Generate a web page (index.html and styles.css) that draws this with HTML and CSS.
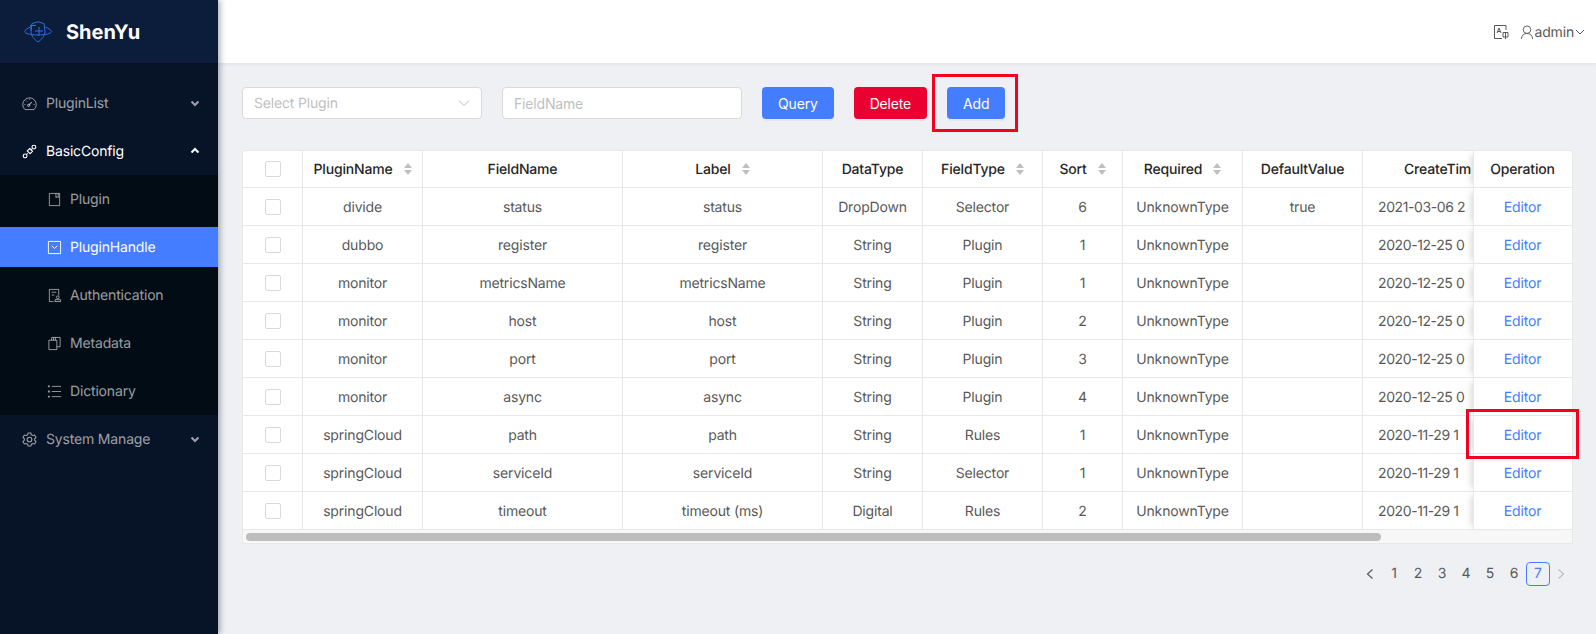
FILE: index.html
```html
<!DOCTYPE html>
<html lang="en">
  <head>
    <meta charset="UTF-8" />
    <title>ShenYu Gateway</title>
    <link rel="stylesheet" href="styles.css">
  </head>
  <body>
    <aside class="sidebar">
      <div class="logo">
        <svg class="logo-icon" viewBox="0 0 28 22" fill="none" stroke="#2f6fe0" stroke-width="1">
          <path d="M8 2.500L14 .8l6 1.700 1 8c0 4.500-3.500 8-7 10.500-3.500-2.500-7-6-7-10.500z"/>
          <path d="M6.500 6C3 7.500 .6 9.500 .6 10.500c0 2 6 3.500 13.400 3.500s13.400-1.500 13.400-3.500c0-1-2.400-3-5.900-4.500"/>
          <path d="M6 4.500h6M7 4.500v5M15 6v9M11 10h8"/>
        </svg>
        <span class="logo-text">ShenYu</span>
      </div>
      <nav class="menu">
        <div class="menu-item">
          <svg class="menu-icon" viewBox="0 0 16 16" fill="none" stroke="currentColor"><path d="M3.200 14.500A7.200 7.200 0 1 1 12.800 14.500z"/><path d="M7 10l3.500-3.500" stroke-width="1.300"/><circle cx="7" cy="10" r="1.200"/><path d="M2.500 9h1.200M4.500 4.800l.9.9M8 2.800V4M12.300 9h1.200"/></svg>
          <span>PluginList</span>
          <svg class="menu-arrow" viewBox="0 0 10 10" fill="none" stroke="currentColor" stroke-width="2"><path d="M1.500 3.500L5 7l3.500-3.500"/></svg>
        </div>
        <div class="menu-item open">
          <svg class="menu-icon" viewBox="0 0 16 16" fill="none" stroke="currentColor" stroke-width="1.200"><circle cx="3.300" cy="12.700" r="2"/><circle cx="12.700" cy="3.300" r="2"/><path d="M8.200 4.800l3 3-2.600 2.600-3-3zM5 11l1-1M11 5l-.8.800"/></svg>
          <span>BasicConfig</span>
          <svg class="menu-arrow" viewBox="0 0 10 10" fill="none" stroke="currentColor" stroke-width="2"><path d="M1.500 6.500L5 3l3.500 3.500"/></svg>
        </div>
        <div class="submenu">
          <div class="submenu-item">
            <svg class="menu-icon" viewBox="0 0 16 16" fill="none" stroke="currentColor"><path d="M2.500 1.500h11v13h-11zM9.500 1.500v4.500l1.500-1 1 1V1.500"/></svg>
            <span>Plugin</span>
          </div>
          <div class="submenu-item active">
            <svg class="menu-icon" viewBox="0 0 16 16" fill="none" stroke="currentColor"><path d="M1.500 1.500h13v13h-13z"/><path d="M5 6l3 3 3-3"/></svg>
            <span>PluginHandle</span>
          </div>
          <div class="submenu-item">
            <svg class="menu-icon" viewBox="0 0 16 16" fill="none" stroke="currentColor"><path d="M7 14.500H2.500v-13h10V8M5 4.500h5M5 7.500h3"/><circle cx="11.500" cy="10" r="1.500"/><path d="M8.500 14.500v-2h6v2z"/></svg>
            <span>Authentication</span>
          </div>
          <div class="submenu-item">
            <svg class="menu-icon" viewBox="0 0 16 16" fill="none" stroke="currentColor"><path d="M2 4.500h8.500v10H2zM5 4.500v-3h9v10h-3.500M7 1.500v3M9 1.500v3"/></svg>
            <span>Metadata</span>
          </div>
          <div class="submenu-item">
            <svg class="menu-icon" viewBox="0 0 16 16" fill="none" stroke="currentColor"><path d="M5 2.500h10M5 8h10M5 13.500h10"/><path d="M1 2.500h2M1 8h2M1 13.500h2" stroke-width="2"/></svg>
            <span>Dictionary</span>
          </div>
        </div>
        <div class="menu-item">
          <svg class="menu-icon" viewBox="0 0 16 16" fill="none" stroke="currentColor" stroke-width="1.100"><path d="M6.500 1l3 0 .5 2 1.500.8 2-.6 1.500 2.600-1.500 1.400v1.600l1.500 1.400-1.500 2.600-2-.6-1.500.8-.5 2h-3l-.5-2-1.500-.8-2 .6L1 10.200l1.500-1.400V7.200L1 5.800l1.500-2.600 2 .6L6 3z"/><circle cx="8" cy="8" r="2.500"/></svg>
          <span>System Manage</span>
          <svg class="menu-arrow" viewBox="0 0 10 10" fill="none" stroke="currentColor" stroke-width="2"><path d="M1.500 3.500L5 7l3.500-3.500"/></svg>
        </div>
      </nav>
    </aside>

    <div class="main">
      <header class="topbar">
        <svg class="lang-icon" viewBox="0 0 16 16" fill="none" stroke="#595959"><path d="M13 6V1.500H1.500v13H9"/><path d="M4 9l2-5 2 5M4.800 7.500h2.400"/><path d="M10 8.500h5v4.500h-5zM12.500 8.500V15"/></svg>
        <svg class="user-icon" viewBox="0 0 14 16" fill="none" stroke="#595959"><circle cx="7" cy="5" r="4"/><path d="M1 15c0-3.500 2.500-6 6-6s6 2.500 6 6"/></svg>
        <span class="user-name">admin</span>
        <svg class="user-arrow" viewBox="0 0 10 10" fill="none" stroke="#595959"><path d="M1 3l4 4 4-4"/></svg>
      </header>

      <section class="content">
        <div class="toolbar">
          <div class="select">
            <span>Select Plugin</span>
            <svg class="select-arrow" viewBox="0 0 12 12" fill="none" stroke="#bfbfbf"><path d="M1 3.500l5 5 5-5"/></svg>
          </div>
          <input class="input" placeholder="FieldName">
          <button class="btn primary">Query</button>
          <button class="btn danger">Delete</button>
          <button class="btn primary">Add</button>
        </div>

        <div class="card">
          <table class="table">
            <colgroup>
              <col class="w60"><col class="w120"><col class="w200"><col class="w200"><col class="w100"><col class="w120"><col class="w80"><col class="w120"><col class="w120"><col class="w110"><col class="w99">
            </colgroup>
            <thead>
              <tr>
                <th><span class="check"></span></th>
                <th><span class="th-sort">PluginName<i class="sorter"></i></span></th>
                <th>FieldName</th>
                <th><span class="th-sort">Label<i class="sorter"></i></span></th>
                <th>DataType</th>
                <th><span class="th-sort">FieldType<i class="sorter"></i></span></th>
                <th><span class="th-sort">Sort<i class="sorter"></i></span></th>
                <th><span class="th-sort">Required<i class="sorter"></i></span></th>
                <th>DefaultValue</th>
                <th class="cut-head">CreateTim</th>
                <th class="fixed">Operation</th>
              </tr>
            </thead>
            <tbody>
              <tr><td><span class="check"></span></td><td>divide</td><td>status</td><td>status</td><td>DropDown</td><td>Selector</td><td>6</td><td>UnknownType</td><td>true</td><td class="cut">2021-03-06 2</td><td class="fixed"><a>Editor</a></td></tr>
              <tr><td><span class="check"></span></td><td>dubbo</td><td>register</td><td>register</td><td>String</td><td>Plugin</td><td>1</td><td>UnknownType</td><td></td><td class="cut">2020-12-25 0</td><td class="fixed"><a>Editor</a></td></tr>
              <tr><td><span class="check"></span></td><td>monitor</td><td>metricsName</td><td>metricsName</td><td>String</td><td>Plugin</td><td>1</td><td>UnknownType</td><td></td><td class="cut">2020-12-25 0</td><td class="fixed"><a>Editor</a></td></tr>
              <tr><td><span class="check"></span></td><td>monitor</td><td>host</td><td>host</td><td>String</td><td>Plugin</td><td>2</td><td>UnknownType</td><td></td><td class="cut">2020-12-25 0</td><td class="fixed"><a>Editor</a></td></tr>
              <tr><td><span class="check"></span></td><td>monitor</td><td>port</td><td>port</td><td>String</td><td>Plugin</td><td>3</td><td>UnknownType</td><td></td><td class="cut">2020-12-25 0</td><td class="fixed"><a>Editor</a></td></tr>
              <tr><td><span class="check"></span></td><td>monitor</td><td>async</td><td>async</td><td>String</td><td>Plugin</td><td>4</td><td>UnknownType</td><td></td><td class="cut">2020-12-25 0</td><td class="fixed"><a>Editor</a></td></tr>
              <tr><td><span class="check"></span></td><td>springCloud</td><td>path</td><td>path</td><td>String</td><td>Rules</td><td>1</td><td>UnknownType</td><td></td><td class="cut">2020-11-29 1</td><td class="fixed"><a>Editor</a></td></tr>
              <tr><td><span class="check"></span></td><td>springCloud</td><td>serviceId</td><td>serviceId</td><td>String</td><td>Selector</td><td>1</td><td>UnknownType</td><td></td><td class="cut">2020-11-29 1</td><td class="fixed"><a>Editor</a></td></tr>
              <tr><td><span class="check"></span></td><td>springCloud</td><td>timeout</td><td>timeout (ms)</td><td>Digital</td><td>Rules</td><td>2</td><td>UnknownType</td><td></td><td class="cut">2020-11-29 1</td><td class="fixed"><a>Editor</a></td></tr>
            </tbody>
          </table>
          <div class="scroll-track"><div class="scroll-thumb"></div></div>
        </div>

        <div class="pagination">
          <svg class="page-arrow" viewBox="0 0 10 12" fill="none" stroke="#595959" stroke-width="1.200"><path d="M7.500 1.500L2.500 6l5 4.500"/></svg>
          <span class="page">1</span>
          <span class="page">2</span>
          <span class="page">3</span>
          <span class="page">4</span>
          <span class="page">5</span>
          <span class="page">6</span>
          <span class="page current">7</span>
          <svg class="page-arrow next" viewBox="0 0 10 12" fill="none" stroke="#bfbfbf" stroke-width="1.200"><path d="M2.500 1.500L7.500 6l-5 4.500"/></svg>
        </div>

        <div class="mark mark-add"></div>
        <div class="mark mark-editor"></div>
      </section>
    </div>
  </body>
</html>
```

FILE: styles.css
```css
* {
  box-sizing: border-box;
}
body {
  margin: 0;
  height: 634px;
  display: flex;
  overflow: hidden;
  background-color: #eef0f4;
  font-family: Inter, "Liberation Sans", sans-serif;
  font-size: 14px;
  letter-spacing: -.17px;
  text-rendering: geometricPrecision;
  color: #595959;
}

/* sidebar */
.sidebar {
  width: 218px;
  flex: none;
  background-color: #071326;
  box-shadow: 2px 0 6px rgba(0, 21, 41, .35);
  position: relative;
  z-index: 2;
}
.logo {
  height: 63px;
  display: flex;
  align-items: center;
  padding-left: 24px;
  background-color: #0c1c3b;
}
.logo-icon {
  width: 28px;
  height: 22px;
  margin-right: 14px;
}
.logo-text {
  font-size: 20px;
  font-weight: 700;
  letter-spacing: 0;
  color: #fff;
}
.menu {
  padding-top: 20px;
  color: rgba(255, 255, 255, .6);
}
.menu-item {
  height: 40px;
  margin-bottom: 8px;
  display: flex;
  align-items: center;
  padding-left: 22px;
  padding-right: 18px;
}
.menu-item span {
  flex: 1;
}
.menu-item.open {
  margin-bottom: 4px;
  color: #fff;
}
.menu-icon {
  width: 15px;
  height: 15px;
  margin-right: 9px;
  flex: none;
}
.menu-arrow {
  width: 10px;
  height: 10px;
}
.submenu {
  background-color: #020c14;
  padding: 4px 0;
  margin-bottom: 4px;
}
.submenu-item {
  height: 40px;
  margin-bottom: 8px;
  display: flex;
  align-items: center;
  padding-left: 47px;
}
.submenu-item .menu-icon {
  margin-right: 8px;
}
.submenu-item:last-child {
  margin-bottom: 0;
}
.submenu-item.active {
  background-color: #447dff;
  color: #fff;
}

/* top bar */
.main {
  flex: 1;
  min-width: 0;
}
.topbar {
  height: 63px;
  background-color: #fff;
  box-shadow: 0 1px 4px rgba(0, 21, 41, .08);
  display: flex;
  align-items: center;
  justify-content: flex-end;
  padding-right: 11px;
  padding-top: 1px;
}
.lang-icon {
  width: 16px;
  height: 16px;
  margin-right: 11px;
}
.user-icon {
  width: 14px;
  height: 15px;
}
.user-arrow {
  width: 10px;
  height: 10px;
  margin-left: 1px;
}

/* content */
.content {
  padding: 24px 23px 0 24px;
  position: relative;
}
.toolbar {
  display: flex;
  gap: 20px;
  margin-bottom: 31px;
}
.select,
.input {
  height: 32px;
  background-color: #fff;
  border: 1px solid #d9d9d9;
  border-radius: 4px;
  font-family: inherit;
  font-size: 14px;
  letter-spacing: inherit;
}
.select {
  width: 240px;
  display: flex;
  align-items: center;
  justify-content: space-between;
  padding: 0 11px;
  color: #bfbfbf;
}
.select-arrow {
  width: 12px;
  height: 12px;
}
.input {
  width: 240px;
  padding: 0 11px;
  outline: none;
}
.input::placeholder {
  color: #bfbfbf;
}
.btn {
  height: 32px;
  padding: 0 16px;
  border: 0;
  border-radius: 4px;
  color: #fff;
  font-family: inherit;
  font-size: 14px;
  letter-spacing: inherit;
  box-shadow: 0 2px 0 rgba(0, 0, 0, .03);
}
.primary {
  background-color: #447dff;
}
.danger {
  background-color: #eb0032;
}

/* table */
.card {
  height: 394px;
  background-color: #fff;
  border: 1px solid #e8e8e8;
  border-radius: 4px 4px 0 0;
  overflow: hidden;
}
.table {
  table-layout: fixed;
  width: 1329px;
  border-collapse: separate;
  border-spacing: 0;
}
.w60 { width: 60px; }
.w80 { width: 80px; }
.w99 { width: 99px; }
.w100 { width: 100px; }
.w110 { width: 110px; }
.w120 { width: 120px; }
.w200 { width: 200px; }
.table th,
.table td {
  padding: 0;
  text-align: center;
  white-space: nowrap;
  overflow: hidden;
  border-right: 1px solid #e8e8e8;
  border-bottom: 1px solid #e8e8e8;
  background-color: #fff;
}
.table th {
  height: 37px;
  font-weight: 500;
  color: #262626;
}
.table td {
  height: 38px;
  padding-top: 1px;
}
.table td a {
  color: #447dff;
}
.table .cut-head {
  text-align: left;
  padding-left: 41px;
  border-right: 0;
}
.table .cut {
  text-align: left;
  padding-left: 15px;
  letter-spacing: -.4px;
  border-right: 0;
}
.table .fixed {
  overflow: visible;
  position: relative;
  padding-right: 1px;
  border-right: 0;
  border-left: 1px solid #e8e8e8;
  box-shadow: -6px 0 6px -4px rgba(0, 0, 0, .15);
}
.check {
  display: block;
  width: 16px;
  height: 16px;
  margin: 0 auto;
  border: 1px solid #d9d9d9;
  border-radius: 2px;
  background-color: #fff;
}
.th-sort {
  display: inline-flex;
  align-items: center;
  gap: 11px;
}
.sorter {
  width: 8px;
  display: flex;
  flex-direction: column;
  gap: 2px;
}
.sorter::before,
.sorter::after {
  content: "";
  border-left: 4px solid transparent;
  border-right: 4px solid transparent;
}
.sorter::before {
  border-bottom: 5px solid #bfbfbf;
}
.sorter::after {
  border-top: 5px solid #bfbfbf;
}
.scroll-track {
  height: 13px;
  padding: 3px 3px 0;
  background-color: #f7f7f7;
}
.scroll-thumb {
  width: 1135px;
  height: 8px;
  border-radius: 4px;
  background-color: #bdbdbd;
}

/* pagination */
.pagination {
  margin-top: 18px;
  display: flex;
  justify-content: flex-end;
  align-items: center;
  height: 24px;
  color: #595959;
}
.page {
  width: 24px;
  height: 24px;
  line-height: 22px;
  text-align: center;
  border: 1px solid transparent;
  border-radius: 4px;
}
.page.current {
  border-color: #447dff;
  color: #447dff;
}
.page-arrow {
  width: 10px;
  height: 12px;
  margin: 0 7px;
}
.page-arrow.next {
  margin-left: 6px;
}

/* red marks drawn over the screenshot */
.mark {
  position: absolute;
  border: 3px solid #f5001e;
}
.mark-add {
  left: 714px;
  top: 11px;
  width: 86px;
  height: 58px;
}
.mark-editor {
  left: 1248px;
  top: 346px;
  width: 113px;
  height: 50px;
}
```
